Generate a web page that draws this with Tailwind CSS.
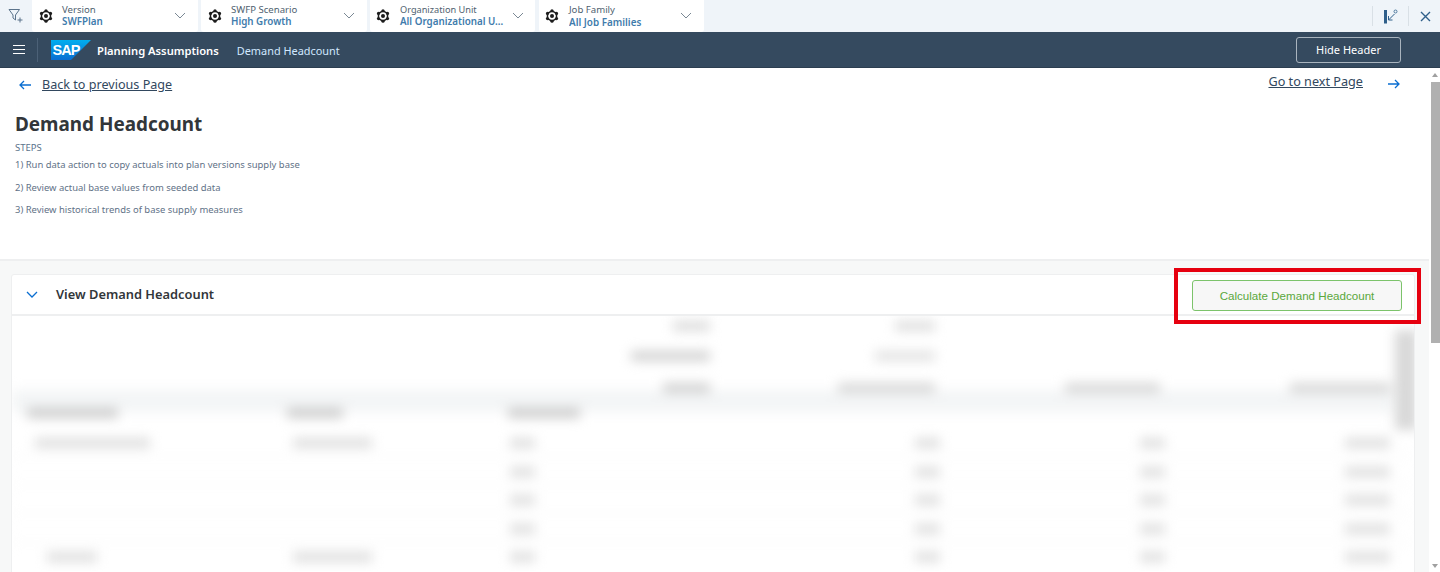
<!DOCTYPE html>
<html lang="en">
<head>
    <meta charset="UTF-8">
    <title>Demand Headcount</title>
    <script src="https://cdn.jsdelivr.net/npm/@tailwindcss/browser@4"></script>
</head>
<body class="h-[572px] overflow-hidden bg-white font-['Noto_Sans',sans-serif] text-[#32363a]">
    <!-- filter bar -->
    <div class="flex h-8 items-stretch bg-[#eff4f9]">
        <div class="flex w-8 items-center justify-center">
            <svg width="16" height="16" viewBox="0 0 16 16" fill="none" stroke="#5b738b" stroke-width="1"><path d="M1 1.500h10.500L7.500 7v5L5 10V7z"/><path d="M12 9.500v5M9.500 12h5"/></svg>
        </div>
        <div class="flex gap-[3px]">
            <div class="flex w-[166px] items-center rounded-b-[3px] bg-white pl-[7px] pr-[12px]">
                <svg class="mr-2 shrink-0" width="14" height="14" viewBox="0 0 14 14"><path d="M7 1.800 11.500 4.400V9.600L7 12.200 2.500 9.600V4.400z" fill="none" stroke="#1d1d1d" stroke-width="1.500"/><g fill="#1d1d1d"><circle cx="7" cy="1.800" r="1.600"/><circle cx="11.500" cy="4.400" r="1.600"/><circle cx="11.500" cy="9.600" r="1.600"/><circle cx="7" cy="12.200" r="1.600"/><circle cx="2.500" cy="9.600" r="1.600"/><circle cx="2.500" cy="4.400" r="1.600"/><circle cx="7" cy="7" r="2"/></g></svg>
                <div class="ml-[1px] min-w-0 flex-1 leading-[12px]">
                    <div class="text-[9.600px] text-[#4f5f6f]">Version</div>
                    <div class="truncate text-[9.800px] font-semibold text-[#3f7cac]">SWFPlan</div>
                </div>
                <svg width="12" height="8" viewBox="0 0 12 8" fill="none" stroke="#7a8894" stroke-width="1"><path d="M1 1l5 5 5-5"/></svg>
            </div>
            <div class="flex w-[166px] items-center rounded-b-[3px] bg-white pl-[7px] pr-[12px]">
                <svg class="mr-2 shrink-0" width="14" height="14" viewBox="0 0 14 14"><path d="M7 1.800 11.500 4.400V9.600L7 12.200 2.500 9.600V4.400z" fill="none" stroke="#1d1d1d" stroke-width="1.500"/><g fill="#1d1d1d"><circle cx="7" cy="1.800" r="1.600"/><circle cx="11.500" cy="4.400" r="1.600"/><circle cx="11.500" cy="9.600" r="1.600"/><circle cx="7" cy="12.200" r="1.600"/><circle cx="2.500" cy="9.600" r="1.600"/><circle cx="2.500" cy="4.400" r="1.600"/><circle cx="7" cy="7" r="2"/></g></svg>
                <div class="ml-[1px] min-w-0 flex-1 leading-[12px]">
                    <div class="text-[9.600px] text-[#4f5f6f]">SWFP Scenario</div>
                    <div class="truncate text-[9.800px] font-semibold text-[#3f7cac]">High Growth</div>
                </div>
                <svg width="12" height="8" viewBox="0 0 12 8" fill="none" stroke="#7a8894" stroke-width="1"><path d="M1 1l5 5 5-5"/></svg>
            </div>
            <div class="flex w-[165px] items-center rounded-b-[3px] bg-white pl-[6px] pr-[11px]">
                <svg class="mr-2 shrink-0" width="14" height="14" viewBox="0 0 14 14"><path d="M7 1.800 11.500 4.400V9.600L7 12.200 2.500 9.600V4.400z" fill="none" stroke="#1d1d1d" stroke-width="1.500"/><g fill="#1d1d1d"><circle cx="7" cy="1.800" r="1.600"/><circle cx="11.500" cy="4.400" r="1.600"/><circle cx="11.500" cy="9.600" r="1.600"/><circle cx="7" cy="12.200" r="1.600"/><circle cx="2.500" cy="9.600" r="1.600"/><circle cx="2.500" cy="4.400" r="1.600"/><circle cx="7" cy="7" r="2"/></g></svg>
                <div class="ml-[2px] min-w-0 flex-1 leading-[12px]">
                    <div class="text-[9.200px] text-[#4f5f6f]">Organization Unit</div>
                    <div class="text-[9.800px] font-semibold whitespace-nowrap text-[#3f7cac]">All Organizational U...</div>
                </div>
                <svg width="12" height="8" viewBox="0 0 12 8" fill="none" stroke="#7a8894" stroke-width="1"><path d="M1 1l5 5 5-5"/></svg>
            </div>
            <div class="ml-px flex w-[165px] items-center rounded-b-[3px] bg-white pl-[6px] pr-[12px]">
                <svg class="mr-2 shrink-0" width="14" height="14" viewBox="0 0 14 14"><path d="M7 1.800 11.500 4.400V9.600L7 12.200 2.500 9.600V4.400z" fill="none" stroke="#1d1d1d" stroke-width="1.500"/><g fill="#1d1d1d"><circle cx="7" cy="1.800" r="1.600"/><circle cx="11.500" cy="4.400" r="1.600"/><circle cx="11.500" cy="9.600" r="1.600"/><circle cx="7" cy="12.200" r="1.600"/><circle cx="2.500" cy="9.600" r="1.600"/><circle cx="2.500" cy="4.400" r="1.600"/><circle cx="7" cy="7" r="2"/></g></svg>
                <div class="ml-[2px] min-w-0 flex-1 leading-[12px]">
                    <div class="text-[9.600px] text-[#4f5f6f]">Job Family</div>
                    <div class="truncate text-[9.900px] font-semibold text-[#3f7cac]">All Job Families</div>
                </div>
                <svg width="12" height="8" viewBox="0 0 12 8" fill="none" stroke="#7a8894" stroke-width="1"><path d="M1 1l5 5 5-5"/></svg>
            </div>
        </div>
        <div class="ml-auto flex items-center">
            <div class="h-[20px] w-px bg-[#d9e0e6]"></div>
            <div class="flex w-[35px] justify-center">
                <svg width="14" height="15" viewBox="0 0 14 15" fill="none" stroke="#2f5f8a"><rect x="0" y="1" width="3" height="13.500" fill="#2f5f8a" stroke="none"/><path d="M10.500 5 4.500 11M4.500 7v4h4" stroke-width="1"/><circle cx="11.500" cy="2.500" r="1.500" stroke-width="0.800"/></svg>
            </div>
            <div class="h-[20px] w-px bg-[#d9e0e6]"></div>
            <div class="flex w-[31px] justify-center pl-[2px]">
                <svg width="11" height="11" viewBox="0 0 11 11" fill="none" stroke="#2f5f8a" stroke-width="1.400"><path d="M1 1l9 9M10 1l-9 9"/></svg>
            </div>
        </div>
    </div>

    <!-- shell header -->
    <div class="flex h-9 items-center bg-[#354a5f] shadow-[inset_0_-1px_0_#2c3e50]">
        <div class="flex w-[37px] justify-center">
            <svg width="12" height="10" viewBox="0 0 12 10" stroke="#fff" stroke-width="1"><path d="M0 .5h12M0 4.500h12M0 8.500h12"/></svg>
        </div>
        <div class="h-[24px] w-px bg-[#4c6177]"></div>
        <svg class="ml-[13px]" width="40" height="20" viewBox="0 0 40 20">
            <defs><linearGradient id="sapBlue" x1="0" y1="0" x2="0" y2="1"><stop offset="0" stop-color="#00aeef"/><stop offset="1" stop-color="#0a6ed1"/></linearGradient></defs>
            <path d="M0 0h40L20 20H0z" fill="url(#sapBlue)"/>
            <text x="1.500" y="15" font-family="Liberation Sans, sans-serif" font-size="14.500" font-weight="700" fill="#fff" textLength="28">SAP</text>
        </svg>
        <span class="ml-[6px] mt-[2px] text-[11.200px] font-semibold text-white">Planning Assumptions</span>
        <span class="ml-[18px] mt-[2px] text-[10.900px] text-[#d1e8ff]">Demand Headcount</span>
        <button class="ml-auto mr-[39px] h-[26px] w-[105px] rounded-[3px] border border-[#a9b4be] text-[11px] text-white">Hide Header</button>
    </div>

    <div class="flex h-[504px]">
        <div class="flex w-[1429px] flex-col">
            <!-- page nav and intro -->
            <div class="h-[193px] shrink-0 border-b-2 border-[#eeeff0] pl-[15px]">
                <div class="flex justify-between pr-[29px]">
                    <div class="mt-[7px] flex items-center pl-[4px]">
                        <svg width="12" height="10" viewBox="0 0 12 10" fill="none" stroke="#0a6ed1" stroke-width="1.300"><path d="M12 5H1M5 1 1 5l4 4"/></svg>
                        <a class="ml-[11px] text-[12.600px] leading-[20px] text-[#32485e] underline">Back to previous Page</a>
                    </div>
                    <div class="mt-[3px] flex">
                        <a class="text-[12.650px] leading-[20px] text-[#32485e] underline">Go to next Page</a>
                        <svg class="ml-[25px] mt-[8px]" width="12" height="10" viewBox="0 0 12 10" fill="none" stroke="#0a6ed1" stroke-width="1.300"><path d="M0 5h11M7 1l4 4-4 4"/></svg>
                    </div>
                </div>
                <h1 class="mt-[15px] text-[18.900px] leading-[28px] font-bold text-[#32363a]">Demand Headcount</h1>
                <p class="mt-[4px] text-[9.500px] leading-[12px] text-[#5b738b]">STEPS</p>
                <p class="mt-[5px] text-[9.450px] leading-[12px] text-[#5f7287]">1) Run data action to copy actuals into plan versions supply base</p>
                <p class="mt-[11px] text-[9.450px] leading-[12px] text-[#5f7287]">2) Review actual base values from seeded data</p>
                <p class="mt-[10px] text-[9.450px] leading-[12px] text-[#5f7287]">3) Review historical trends of base supply measures</p>
            </div>
            <!-- panel -->
            <div class="min-h-0 flex-1 overflow-hidden bg-[#f7f8f8] pl-[11px] pr-[14px] pt-[13px]">
                <div class="relative h-[320px] rounded-t-[3px] border border-[#eeeff0] bg-white">
                    <div class="flex h-[41px] items-center border-b-2 border-[#eeeff0] pl-[14px]">
                        <svg width="12" height="7" viewBox="0 0 12 7" fill="none" stroke="#0a6ed1" stroke-width="1.300"><path d="M1 1l5 5 5-5"/></svg>
                        <span class="ml-[18px] text-[12.850px] font-semibold text-[#32363a]">View Demand Headcount</span>
                        <button class="ml-auto mr-[12px] mt-[2px] h-[31px] w-[210px] rounded-[3px] border border-[#7cc36b] bg-[#f7f7f7] font-['Liberation_Sans',sans-serif] text-[11.600px] text-[#5aa83c]">Calculate Demand Headcount</button>
                    </div>
                    <!-- blurred table -->
                    <div class="overflow-hidden">
                        <div class="grid grid-cols-[275px_221px_92px_110px_230px_225px_227px_22px] grid-rows-[20px_40px_24px_29px_28px_29px_28px_29px_28px] items-center blur-[6px]">
                            <div class="col-span-7 col-start-1 row-span-2 row-start-3 mt-[14px] h-[22px] self-start bg-[#f3f5f6]"></div>
                            <div class="col-span-full col-start-1 row-start-5 h-full border-b-2 border-[#f8f8f8]"></div>
                            <div class="col-span-full col-start-1 row-start-6 h-full border-b-2 border-[#f8f8f8]"></div>
                            <div class="col-span-full col-start-1 row-start-7 h-full border-b-2 border-[#f8f8f8]"></div>
                            <div class="col-span-full col-start-1 row-start-8 h-full border-b-2 border-[#f8f8f8]"></div>
                            <div class="col-start-4 row-start-1 ml-auto h-[10px] w-[37px] bg-[#dcdcdc]"></div>
                            <div class="col-start-5 row-start-1 ml-auto mr-[5px] h-[10px] w-[40px] bg-[#dedede]"></div>
                            <div class="col-start-4 row-start-2 ml-auto h-[10px] w-[79px] bg-[#d2d2d2]"></div>
                            <div class="col-start-5 row-start-2 ml-auto mr-[5px] h-[10px] w-[60px] bg-[#e2e2e2]"></div>
                            <div class="col-start-4 row-start-3 ml-auto h-[10px] w-[47px] bg-[#d2d2d2]"></div>
                            <div class="col-start-5 row-start-3 ml-auto mr-[5px] h-[10px] w-[97px] bg-[#d8d8d8]"></div>
                            <div class="col-start-6 row-start-3 ml-auto mr-[5px] h-[10px] w-[95px] bg-[#d8d8d8]"></div>
                            <div class="col-start-7 row-start-3 ml-auto mr-[2px] h-[10px] w-[100px] bg-[#d8d8d8]"></div>
                            <div class="col-start-8 row-span-4 row-start-1 ml-[3px] mt-[14px] h-[100px] w-[22px] self-start bg-[#d8d8d8]"></div>
                            <div class="col-start-1 row-start-4 mb-[3px] ml-[15px] h-[10px] w-[91px] bg-[#cccccc]"></div>
                            <div class="col-start-2 row-start-4 mb-[3px] h-[10px] w-[56px] bg-[#cccccc]"></div>
                            <div class="col-start-3 row-start-4 mb-[3px] h-[10px] w-[72px] bg-[#cccccc]"></div>
                            <div class="col-start-1 row-start-5 ml-[23px] h-[10px] w-[115px] bg-[#dedede]"></div>
                            <div class="col-start-2 row-start-5 ml-[6px] h-[10px] w-[79px] bg-[#dedede]"></div>
                            <div class="col-start-3 row-start-5 ml-[2px] h-[10px] w-[25px] bg-[#dedede]"></div>
                            <div class="col-start-5 row-start-5 ml-auto h-[10px] w-[25px] bg-[#dedede]"></div>
                            <div class="col-start-6 row-start-5 ml-auto h-[10px] w-[25px] bg-[#dedede]"></div>
                            <div class="col-start-7 row-start-5 ml-auto mr-[2px] h-[10px] w-[45px] bg-[#dedede]"></div>
                            <div class="col-start-3 row-start-6 ml-[2px] h-[10px] w-[25px] bg-[#dedede]"></div>
                            <div class="col-start-5 row-start-6 ml-auto h-[10px] w-[25px] bg-[#dedede]"></div>
                            <div class="col-start-6 row-start-6 ml-auto h-[10px] w-[25px] bg-[#dedede]"></div>
                            <div class="col-start-7 row-start-6 ml-auto mr-[2px] h-[10px] w-[45px] bg-[#dedede]"></div>
                            <div class="col-start-3 row-start-7 ml-[2px] h-[10px] w-[25px] bg-[#dedede]"></div>
                            <div class="col-start-5 row-start-7 ml-auto h-[10px] w-[25px] bg-[#dedede]"></div>
                            <div class="col-start-6 row-start-7 ml-auto h-[10px] w-[25px] bg-[#dedede]"></div>
                            <div class="col-start-7 row-start-7 ml-auto mr-[2px] h-[10px] w-[45px] bg-[#dedede]"></div>
                            <div class="col-start-3 row-start-8 ml-[2px] h-[10px] w-[25px] bg-[#dedede]"></div>
                            <div class="col-start-5 row-start-8 ml-auto h-[10px] w-[25px] bg-[#dedede]"></div>
                            <div class="col-start-6 row-start-8 ml-auto h-[10px] w-[25px] bg-[#dedede]"></div>
                            <div class="col-start-7 row-start-8 ml-auto mr-[2px] h-[10px] w-[45px] bg-[#dedede]"></div>
                            <div class="col-start-1 row-start-9 ml-[35px] h-[10px] w-[50px] bg-[#dedede]"></div>
                            <div class="col-start-2 row-start-9 ml-[6px] h-[10px] w-[79px] bg-[#dedede]"></div>
                            <div class="col-start-3 row-start-9 ml-[2px] h-[10px] w-[25px] bg-[#dedede]"></div>
                            <div class="col-start-5 row-start-9 ml-auto h-[10px] w-[25px] bg-[#dedede]"></div>
                            <div class="col-start-6 row-start-9 ml-auto h-[10px] w-[25px] bg-[#dedede]"></div>
                            <div class="col-start-7 row-start-9 ml-auto mr-[2px] h-[10px] w-[45px] bg-[#dedede]"></div>
                        </div>
                    </div>
                    <!-- red callout over the button -->
                    <div class="absolute left-[1162px] top-[-7px] h-[56px] w-[247px] border-[4px] border-[#e6000f]"></div>
                </div>
            </div>
        </div>
        <!-- page scrollbar -->
        <div class="relative w-[11px] bg-white">
            <div class="absolute left-[2px] right-0 top-[14px] h-[261px] bg-[#b0b0b0]"></div>
            <div class="absolute left-[3px] top-[5px] h-0 w-0 border-x-[3px] border-b-[4px] border-x-transparent border-b-[#a0a0a0]"></div>
            <div class="absolute bottom-[4px] left-[3px] h-0 w-0 border-x-[3px] border-t-[4px] border-x-transparent border-t-[#a0a0a0]"></div>
        </div>
    </div>
</body>
</html>
